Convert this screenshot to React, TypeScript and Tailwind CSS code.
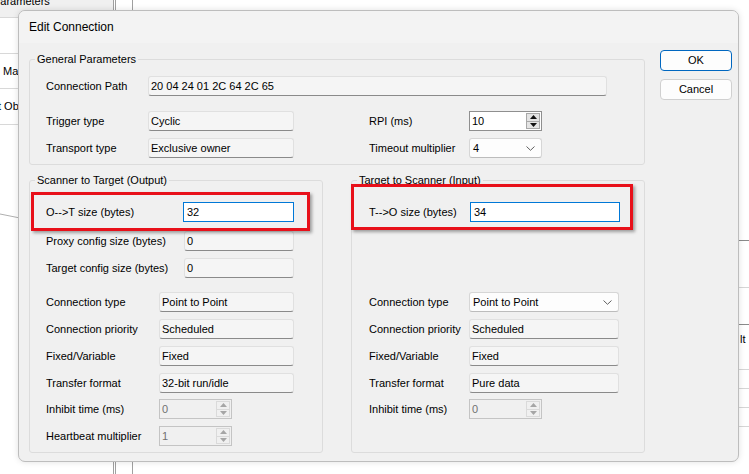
import type { ReactNode } from "react";

function ReadField({ value, w }: { value: string; w: string }) {
  return (
    <div
      className={`${w} flex h-[20px] shrink-0 items-center rounded-[3px] border border-[#e0e0e0] border-b-[#8a8a8a] bg-[#f5f5f5] pl-[2px]`}
    >
      {value}
    </div>
  );
}

function TextBox({ value, w }: { value: string; w: string }) {
  return (
    <div className={`${w} flex h-[20px] shrink-0 items-center border border-[#0078d7] bg-white pl-[3px]`}>
      {value}
    </div>
  );
}

function Tri({ up, color }: { up?: boolean; color: string }) {
  return (
    <svg width="7" height="4" viewBox="0 0 7 4" aria-hidden>
      <polygon points={up ? "0,4 3.5,0 7,4" : "0,0 7,0 3.5,4"} fill={color} />
    </svg>
  );
}

function Spin({ value, disabled = false }: { value: string; disabled?: boolean }) {
  return (
    <div
      className={[
        "flex h-[20px] w-[73px] shrink-0 border",
        disabled ? "border-[#c4c4c4] bg-[#f0f0f0] text-[#707070]" : "border-[#8f8f8f] bg-white",
      ].join(" ")}
    >
      <span className="flex flex-1 items-center pl-[2px]">{value}</span>
      <span
        className={[
          "m-px flex w-[14px] flex-col border",
          disabled ? "border-[#dadada] bg-[#f0f0f0]" : "border-[#a8a8a8] bg-[#e4e4e4]",
        ].join(" ")}
      >
        <span
          className={[
            "flex flex-1 items-center justify-center border-b",
            disabled ? "border-[#dadada]" : "border-[#a8a8a8]",
          ].join(" ")}
        >
          <Tri up color={disabled ? "#a6a6a6" : "#111"} />
        </span>
        <span className="flex flex-1 items-center justify-center">
          <Tri color={disabled ? "#a6a6a6" : "#111"} />
        </span>
      </span>
    </div>
  );
}

function Combo({ value, w }: { value: string; w: string }) {
  return (
    <div
      className={`${w} flex h-[20px] shrink-0 items-center justify-between rounded-[3px] border border-[#d6d6d6] border-b-[#bcbcbc] bg-[#fdfdfd] pl-[3px] pr-[6px]`}
    >
      <span>{value}</span>
      <svg width="9" height="5" viewBox="0 0 9 5" aria-hidden>
        <path d="M0.5 0.5 L4.5 4.3 L8.5 0.5" fill="none" stroke="#606060" strokeWidth="1" />
      </svg>
    </div>
  );
}

function Row({
  label,
  labelW,
  className = "",
  children,
}: {
  label: string;
  labelW: string;
  className?: string;
  children: ReactNode;
}) {
  return (
    <div className={`flex h-[20px] items-center ${className}`}>
      <span className={`${labelW} shrink-0 whitespace-nowrap`}>{label}</span>
      {children}
    </div>
  );
}

function Group({ title, className = "", children }: { title: string; className?: string; children: ReactNode }) {
  return (
    <fieldset className={`rounded-[3px] border border-[#dcdcdc] ${className}`}>
      <legend className="ml-[5px] px-[2px] leading-[14px]">{title}</legend>
      {children}
    </fieldset>
  );
}

function EditConnection() {
  return (
    <div className="absolute left-[18px] top-[10px] flex h-[452px] w-[721px] flex-col overflow-hidden rounded-[7px] border border-[#bdbdbd] bg-[#f0f0f0] shadow-[0_0_6px_rgba(0,0,0,0.12)]">
      <div className="flex h-[32px] shrink-0 items-center bg-[#f3f3f3] pl-[10px] text-[12px]">Edit Connection</div>

      <div className="flex flex-1 pl-[10px]">
        <div className="flex w-[616px] flex-col pt-[9px]">
          <Group title="General Parameters">
            <div className="pb-[6px] pl-[16px] pt-[10px]">
              <Row label="Connection Path" labelW="w-[102px]">
                <ReadField value="20 04 24 01 2C 64 2C 65" w="w-[459px]" />
              </Row>
              <Row label="Trigger type" labelW="w-[102px]" className="mt-[15px]">
                <ReadField value="Cyclic" w="w-[146px]" />
                <span className="ml-[75px] w-[100px] shrink-0">RPI (ms)</span>
                <Spin value="10" />
              </Row>
              <Row label="Transport type" labelW="w-[102px]" className="mt-[7px]">
                <ReadField value="Exclusive owner" w="w-[146px]" />
                <span className="ml-[75px] w-[100px] shrink-0">Timeout multiplier</span>
                <Combo value="4" w="w-[73px]" />
              </Row>
            </div>
          </Group>

          <div className="mt-[8px] flex gap-[28px]">
            <Group title="Scanner to Target (Output)" className="w-[294px]">
              <div className="pb-[6px] pl-[16px] pt-[15px]">
                <div className="relative w-[248px]">
                  <span className="pointer-events-none absolute bottom-[-9px] left-[-15px] right-[-16px] top-[-10px] z-10 border-[3px] border-[#e8101a] shadow-[2px_2px_3px_rgba(0,0,0,0.35)]" />
                  <Row label="O-->T size (bytes)" labelW="w-[137px]">
                    <TextBox value="32" w="w-[111px]" />
                  </Row>
                </div>
                <Row label="Proxy config size (bytes)" labelW="w-[138px]" className="mt-[9px]">
                  <ReadField value="0" w="w-[110px]" />
                </Row>
                <Row label="Target config size (bytes)" labelW="w-[138px]" className="mt-[7px]">
                  <ReadField value="0" w="w-[110px]" />
                </Row>
                <Row label="Connection type" labelW="w-[113px]" className="mt-[14px]">
                  <ReadField value="Point to Point" w="w-[135px]" />
                </Row>
                <Row label="Connection priority" labelW="w-[113px]" className="mt-[7px]">
                  <ReadField value="Scheduled" w="w-[135px]" />
                </Row>
                <Row label="Fixed/Variable" labelW="w-[113px]" className="mt-[7px]">
                  <ReadField value="Fixed" w="w-[135px]" />
                </Row>
                <Row label="Transfer format" labelW="w-[113px]" className="mt-[7px]">
                  <ReadField value="32-bit run/idle" w="w-[135px]" />
                </Row>
                <Row label="Inhibit time (ms)" labelW="w-[113px]" className="mt-[6px]">
                  <Spin value="0" disabled />
                </Row>
                <Row label="Heartbeat multiplier" labelW="w-[113px]" className="mt-[7px]">
                  <Spin value="1" disabled />
                </Row>
              </div>
            </Group>

            <Group title="Target to Scanner (Input)" className="w-[294px]">
              <div className="pb-[6px] pl-[17px] pt-[15px]">
                <div className="relative w-[251px]">
                  <span className="pointer-events-none absolute bottom-[-8px] left-[-18px] right-[-13px] top-[-18px] z-10 border-[3px] border-[#e8101a] shadow-[2px_2px_3px_rgba(0,0,0,0.35)]" />
                  <Row label="T-->O size (bytes)" labelW="w-[101px]">
                    <TextBox value="34" w="w-[150px]" />
                  </Row>
                </div>
                <Row label="Connection type" labelW="w-[100px]" className="mt-[70px]">
                  <Combo value="Point to Point" w="w-[150px]" />
                </Row>
                <Row label="Connection priority" labelW="w-[100px]" className="mt-[7px]">
                  <ReadField value="Scheduled" w="w-[150px]" />
                </Row>
                <Row label="Fixed/Variable" labelW="w-[100px]" className="mt-[7px]">
                  <ReadField value="Fixed" w="w-[150px]" />
                </Row>
                <Row label="Transfer format" labelW="w-[100px]" className="mt-[7px]">
                  <ReadField value="Pure data" w="w-[150px]" />
                </Row>
                <Row label="Inhibit time (ms)" labelW="w-[100px]" className="mt-[6px]">
                  <Spin value="0" disabled />
                </Row>
              </div>
            </Group>
          </div>
        </div>

        <div className="ml-[15px] flex w-[72px] flex-col pt-[7px]">
          <button
            type="button"
            className="h-[21px] rounded-[4px] border border-[#0067c0] bg-[#fdfdfd] text-[11px]"
          >
            OK
          </button>
          <button
            type="button"
            className="mt-[8px] h-[21px] rounded-[4px] border border-[#d0d0d0] bg-[#fdfdfd] text-[11px]"
          >
            Cancel
          </button>
        </div>
      </div>
    </div>
  );
}

export default function App() {
  return (
    <div className="relative flex h-[474px] w-[749px] overflow-hidden bg-white font-['Liberation_Sans',Arial,sans-serif] text-[11px] text-black">
      {/* project tree behind the dialog */}
      <div className="relative w-[116px] shrink-0 border-r-[3px] border-double border-[#a0a0a0]">
        <div className="h-[18px] overflow-hidden border-b border-[#d8d8d8] bg-[#f0f0f0]">
          <div className="-ml-[7px] -mt-[7px] whitespace-nowrap">Parameters</div>
        </div>
        <div className="h-[36px] border-b border-[#d8d8d8]" />
        <div className="flex h-[35px] items-center border-b border-[#d8d8d8] pl-[3px]">Mapping</div>
        <div className="flex h-[36px] items-center overflow-hidden whitespace-nowrap border-b border-[#d8d8d8]">
          <span className="-ml-[2px]">t Objects</span>
        </div>
        <svg className="absolute left-0 top-[210px]" width="30" height="12" aria-hidden>
          <line x1="0" y1="4" x2="30" y2="10" stroke="#b0b0b0" strokeWidth="1" />
        </svg>
      </div>
      <div className="w-[17px] shrink-0 border-r border-[#a0a0a0]" />
      <div className="flex-1" />
      <div className="flex w-[11px] shrink-0 flex-col">
        <div className="h-[241px] shrink-0 border-b border-[#8a8a8a]" />
        <div className="h-[47px] shrink-0 border-b border-[#d6d6d6]" />
        <div className="h-[37px] shrink-0 border-b border-[#8a8a8a]" />
        <div className="flex h-[45px] shrink-0 items-start border-b border-[#d6d6d6] pl-[2px] pt-[6px]">lt</div>
        <div className="h-[19px] shrink-0 border-b border-[#d6d6d6]" />
        <div className="h-[19px] shrink-0 border-b border-[#d6d6d6]" />
        <div className="h-[19px] shrink-0 border-b border-[#d6d6d6]" />
      </div>

      <EditConnection />
    </div>
  );
}
